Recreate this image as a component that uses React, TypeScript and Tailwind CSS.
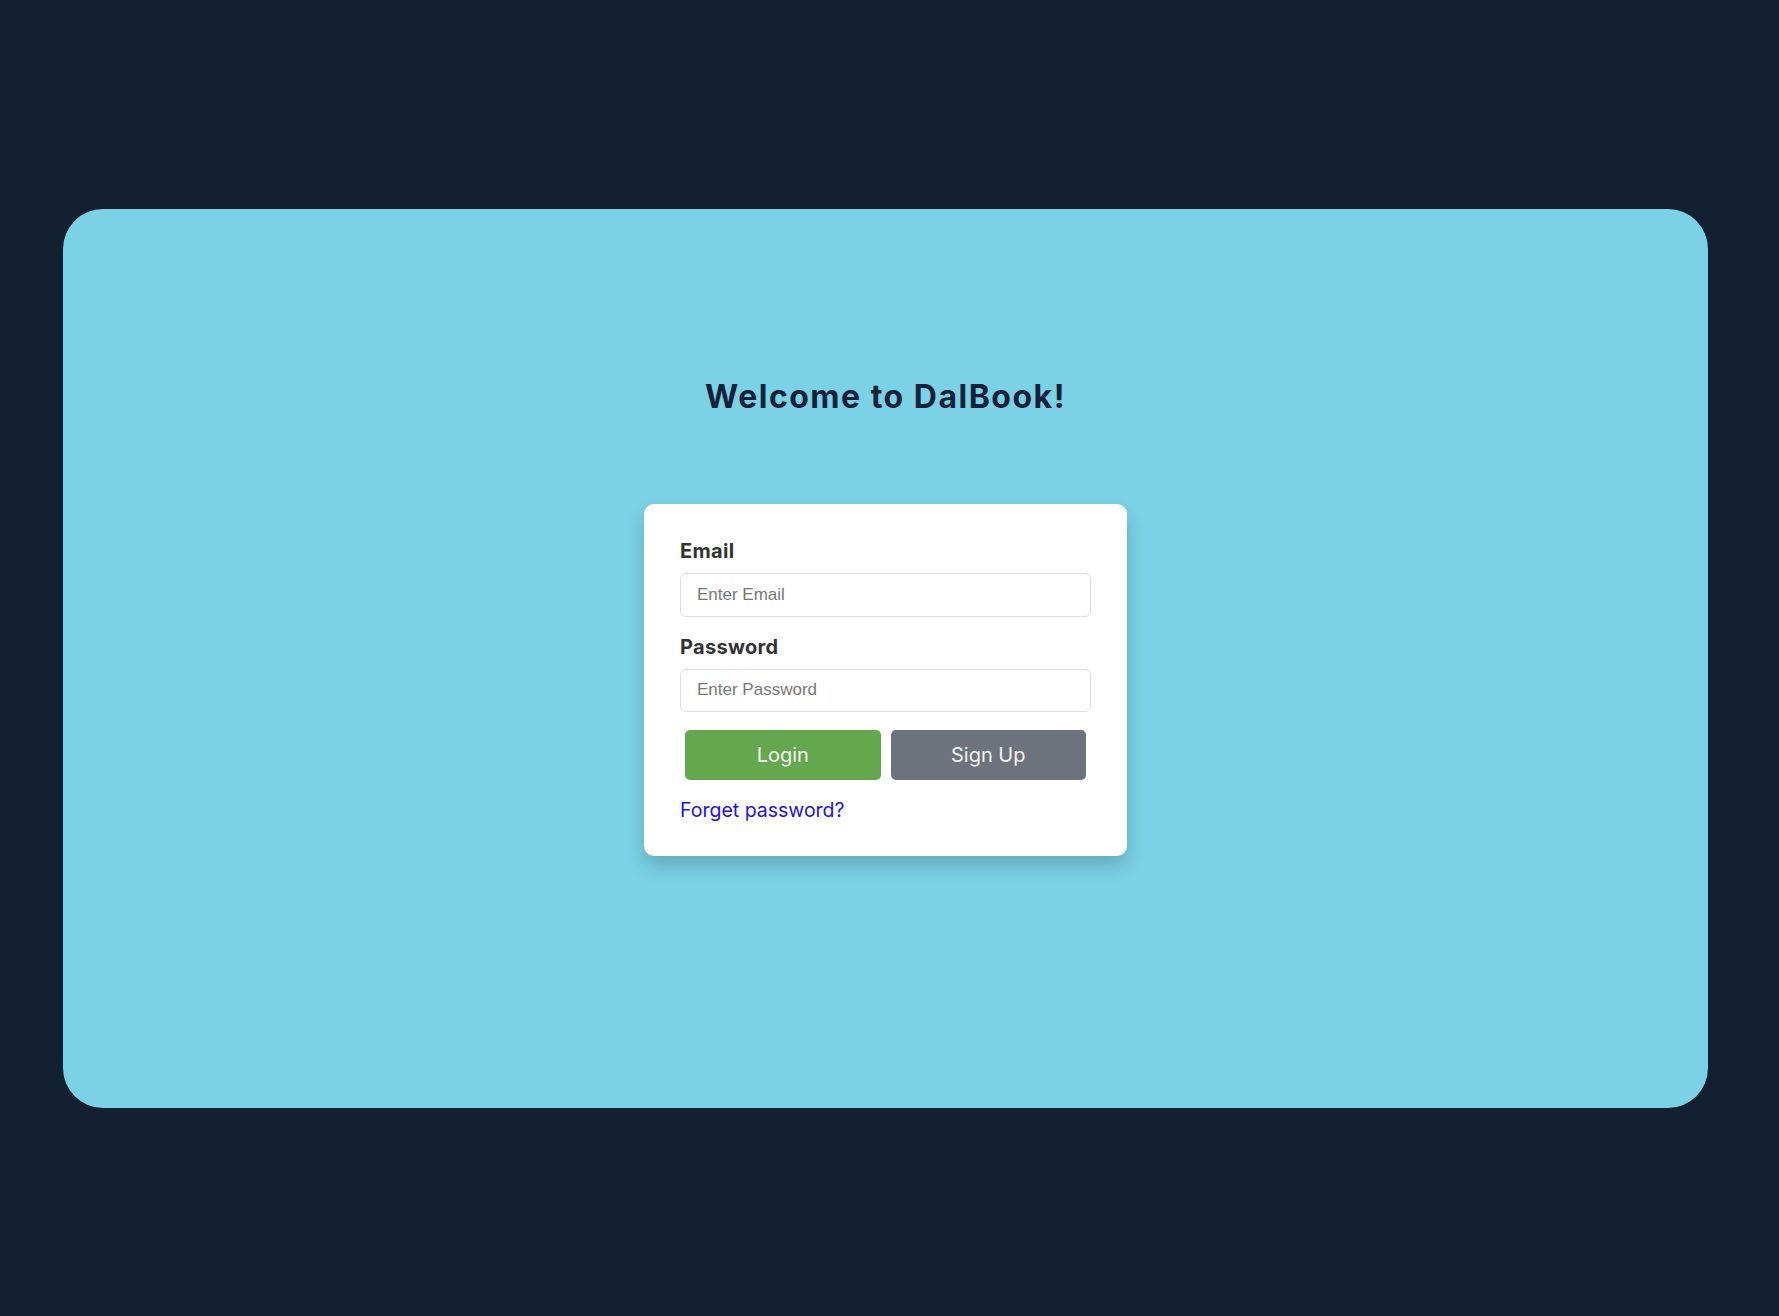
import React from "react";

export default function App() {
  return (
    <div
      className="h-[1316px] w-full bg-[#122032] flex items-center"
      style={{ fontFamily: "Inter, 'Noto Sans', sans-serif" }}
    >
      <div className="ml-[63px] w-[1645px] h-[899px] rounded-[40px] bg-[#7bd1e5] flex flex-col items-center pt-[168px]">
        <h1 className="text-[32px] leading-[40px] font-bold text-[#14213a] tracking-[1.5px]">
          Welcome to DalBook!
        </h1>
        <div className="mt-[87px] w-[483px] rounded-[10px] bg-white pt-[33px] px-[36px] pb-[32px] shadow-[0_10px_18px_rgba(0,0,0,0.18)]">
          <label className="block text-[20px] leading-[28px] font-bold text-[#333333] tracking-[0.3px]">
            Email
          </label>
          <input
            type="text"
            placeholder="Enter Email"
            className="mt-2 block w-full h-[44px] rounded-[6px] border border-[#dedede] px-4 text-[17px] outline-none placeholder:text-[#777777]"
            style={{ fontFamily: "'Liberation Sans', Arial, sans-serif" }}
          />
          <label className="mt-4 block text-[20px] leading-[28px] font-bold text-[#333333] tracking-[0.3px]">
            Password
          </label>
          <input
            type="password"
            placeholder="Enter Password"
            className="mt-2 block w-full h-[43px] rounded-[6px] border border-[#dedede] px-4 text-[17px] outline-none placeholder:text-[#777777]"
            style={{ fontFamily: "'Liberation Sans', Arial, sans-serif" }}
          />
          <div className="mt-[13px] flex">
            <button className="m-[5px] flex-1 h-[50px] rounded-[5px] bg-[#64a74e] text-[20px] text-[#f4f8f2]">
              Login
            </button>
            <button className="m-[5px] flex-1 h-[50px] rounded-[5px] bg-[#6c737c] text-[20px] text-[#f4f4f6]">
              Sign Up
            </button>
          </div>
          <a href="#" className="mt-[11px] block text-[19.5px] leading-[28px] text-[#2314d4]">
            Forget password?
          </a>
        </div>
      </div>
    </div>
  );
}
